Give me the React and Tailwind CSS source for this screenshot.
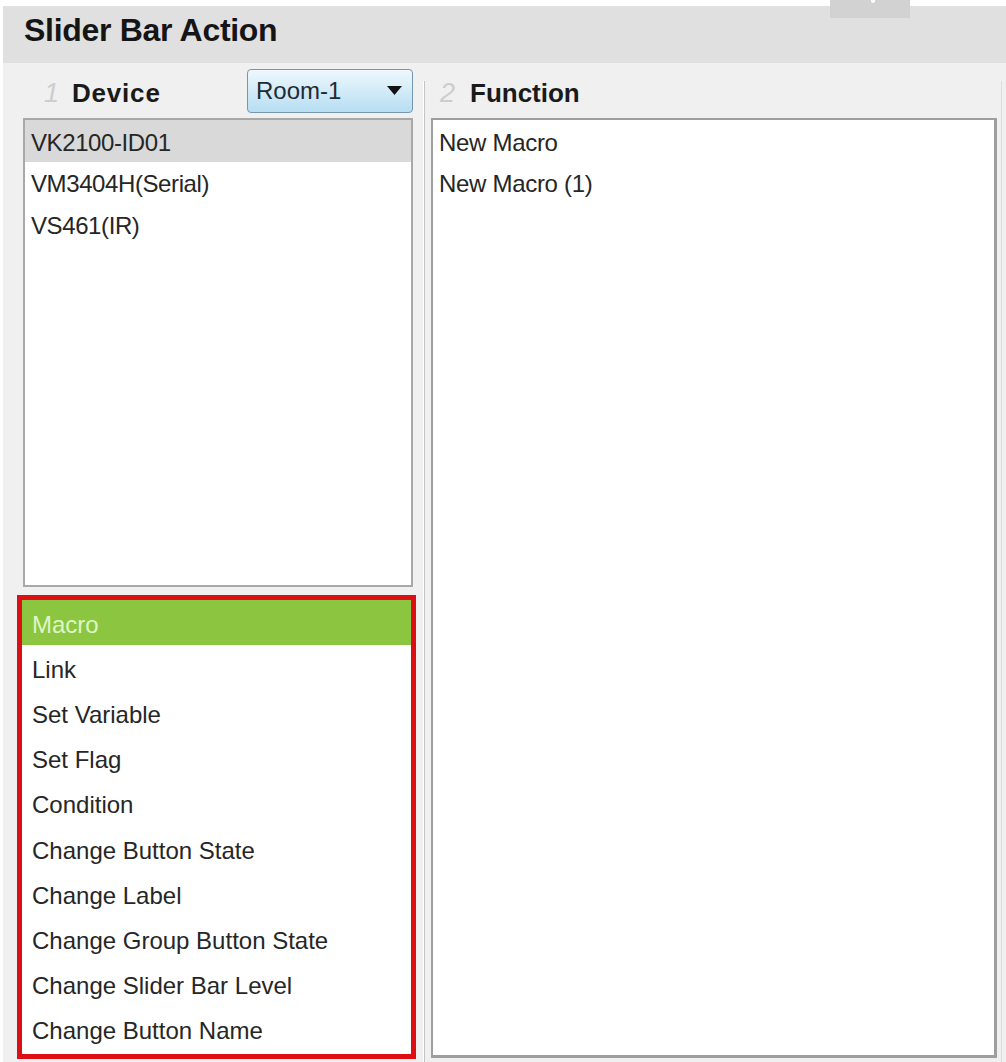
import React from "react";

const devices = ["VK2100-ID01", "VM3404H(Serial)", "VS461(IR)"];
const actions = [
  "Macro",
  "Link",
  "Set Variable",
  "Set Flag",
  "Condition",
  "Change Button State",
  "Change Label",
  "Change Group Button State",
  "Change Slider Bar Level",
  "Change Button Name",
];
const functions = ["New Macro", "New Macro (1)"];

export default function App() {
  return (
    <div
      className="relative w-[1006px] h-[1062px] overflow-hidden bg-white pt-[6px] pl-[3px]"
      style={{ fontFamily: '"Liberation Sans", Arial, sans-serif' }}
    >
      {/* cropped button at top right */}
      <div className="absolute left-[830px] top-0 w-[80px] h-[18px] bg-[#d2d2d2]">
        <div className="absolute left-[41px] top-0 w-[4px] h-[3px] bg-white rounded-b-full" />
      </div>

      <div className="flex flex-col h-full bg-[#f0f0f0]">
        {/* header */}
        <div className="h-[57px] shrink-0 bg-[#e0e0e0] pl-[21px] pt-[8px]">
          <span className="text-[32px] leading-none font-bold text-[#151515] tracking-[-0.3px]">
            Slider Bar Action
          </span>
        </div>

        {/* body */}
        <div className="flex flex-1 min-h-0 pl-[14px]">
          {/* left column */}
          <div className="w-[400px] shrink-0 flex flex-col">
            <div className="h-[55px] flex items-center">
              <span className="ml-[27px] w-[28px] text-[27px] leading-none italic font-light text-[#cdcdcd] pt-[5px]">
                1
              </span>
              <span className="text-[26px] leading-none font-bold text-[#1a1a1a] pt-[5px] tracking-[0.8px]">
                Device
              </span>
              <div className="ml-auto mr-[4px] w-[166px] h-[44px] rounded-[4px] border border-[#7597b1] bg-gradient-to-b from-[#eef8fd] to-[#b6def2] flex items-center pl-[8px] pr-[10px]">
                <span className="text-[24px] leading-none text-[#1f2b34] pt-[1px]">Room-1</span>
                <svg className="ml-auto" width="15" height="9" viewBox="0 0 15 9">
                  <path d="M0 0 L15 0 L7.5 9 Z" fill="#111" />
                </svg>
              </div>
            </div>

            <div className="ml-[6px] w-[390px] h-[469px] border-2 border-[#a8a8a8] bg-white">
              {devices.map((d, i) => (
                <div
                  key={d}
                  className={`h-[41.5px] flex items-center pl-[6px] pt-[4px] text-[24px] leading-none text-[#262626] tracking-[-0.4px] ${
                    i === 0 ? "bg-[#d9d9d9]" : ""
                  }`}
                >
                  {d}
                </div>
              ))}
            </div>

            <div className="mt-[8px] w-[399px] border-[5px] border-[#dc0f14] bg-white pb-[2px]">
              {actions.map((a, i) => (
                <div
                  key={a}
                  className={`h-[45.2px] flex items-center pl-[10px] pt-[4px] text-[24px] leading-none ${
                    i === 0 ? "bg-[#8cc540] text-[#dcf7c6]" : "text-[#262626]"
                  }`}
                >
                  {a}
                </div>
              ))}
            </div>
          </div>

          {/* separator */}
          <div className="w-[14px] shrink-0 flex justify-center pt-[18px]">
            <div className="w-[2px] h-full bg-[#c4c4c4] border-l border-white" />
          </div>

          {/* right column */}
          <div className="w-[566px] shrink-0 flex flex-col">
            <div className="h-[55px] flex items-center">
              <span className="ml-[9px] w-[30px] text-[27px] leading-none italic font-light text-[#cdcdcd] pt-[5px]">
                2
              </span>
              <span className="text-[26px] leading-none font-bold text-[#1a1a1a] pt-[5px]">
                Function
              </span>
            </div>
            <div className="h-[940px] border-2 border-[#9e9e9e] border-r-[3px] border-b-[3px] bg-white">
              {functions.map((f) => (
                <div
                  key={f}
                  className="h-[41.5px] flex items-center pl-[6px] pt-[4px] text-[24px] leading-none text-[#262626] tracking-[-0.3px]"
                >
                  {f}
                </div>
              ))}
            </div>
          </div>

          {/* right edge strip */}
          <div className="flex-1 flex justify-center pt-[18px]">
            <div className="w-[1px] h-full bg-[#dcdcdc]" />
          </div>
        </div>
      </div>
    </div>
  );
}
